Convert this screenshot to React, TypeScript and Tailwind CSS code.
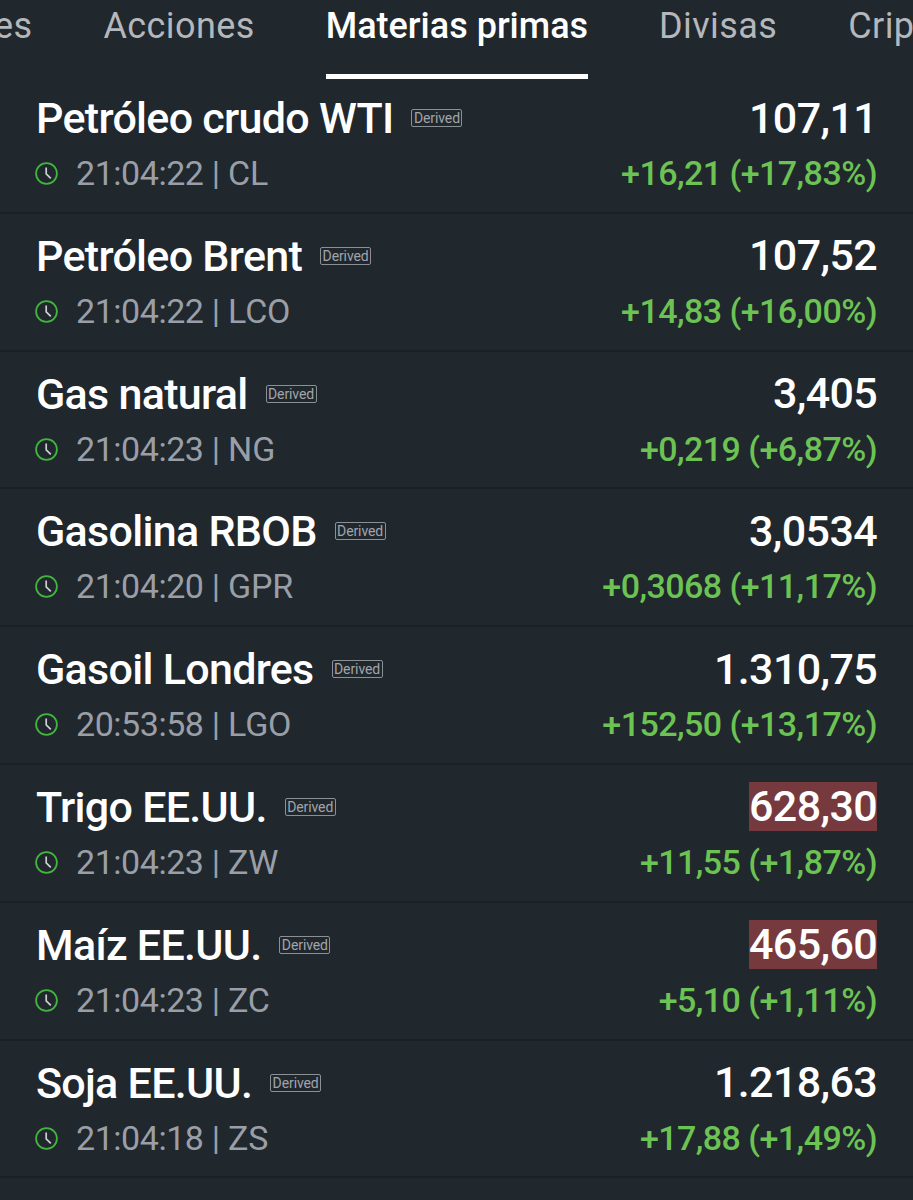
import React from "react";

interface Commodity {
  name: string;
  time: string;
  symbol: string;
  price: string;
  change: string;
  flash?: boolean;
}

const commodities: Commodity[] = [
  { name: "Petróleo crudo WTI", time: "21:04:22", symbol: "CL", price: "107,11", change: "+16,21 (+17,83%)" },
  { name: "Petróleo Brent", time: "21:04:22", symbol: "LCO", price: "107,52", change: "+14,83 (+16,00%)" },
  { name: "Gas natural", time: "21:04:23", symbol: "NG", price: "3,405", change: "+0,219 (+6,87%)" },
  { name: "Gasolina RBOB", time: "21:04:20", symbol: "GPR", price: "3,0534", change: "+0,3068 (+11,17%)" },
  { name: "Gasoil Londres", time: "20:53:58", symbol: "LGO", price: "1.310,75", change: "+152,50 (+13,17%)" },
  { name: "Trigo EE.UU.", time: "21:04:23", symbol: "ZW", price: "628,30", change: "+11,55 (+1,87%)", flash: true },
  { name: "Maíz EE.UU.", time: "21:04:23", symbol: "ZC", price: "465,60", change: "+5,10 (+1,11%)", flash: true },
  { name: "Soja EE.UU.", time: "21:04:18", symbol: "ZS", price: "1.218,63", change: "+17,88 (+1,49%)" },
];

const ClockIcon = () => (
  <svg viewBox="0 0 23 23" className="h-[23px] w-[23px] shrink-0" fill="none">
    <circle cx="11.5" cy="11.5" r="10.4" stroke="#41b53e" strokeWidth="1.8" />
    <path d="M11.2 5.5v6.4l4.6 4.4" stroke="#cdd0d4" strokeWidth="1.7" />
  </svg>
);

const CommodityRow: React.FC<{ item: Commodity }> = ({ item }) => (
  <div className="h-[137.8px] shrink-0 border-b-2 border-[#1a2026] pr-[36px] pl-[35px] pt-[15px]">
    <div className="flex h-[54px] items-center justify-between">
      <div className="flex items-center">
        <span className="ml-px text-[43px] leading-[54px] font-medium tracking-[-0.7px] text-white">{item.name}</span>
        <span className="ml-[18px] flex h-[18px] w-[51px] items-center justify-center rounded-[2px] border border-[#8b9096] text-[14px] leading-none tracking-[-0.1px] text-[#a0a5ab]">
          Derived
        </span>
      </div>
      <span
        className={`h-[49px] text-[43px] leading-[49px] font-medium tracking-[-0.65px] text-white ${
          item.flash ? "bg-[#763a3e]" : ""
        }`}
      >
        {item.price}
      </span>
    </div>
    <div className="flex h-[57px] items-center justify-between">
      <div className="flex items-center gap-[18px]">
        <ClockIcon />
        <span className="text-[34px] tracking-[-0.2px] text-[#9a9fa7]">
          <span className="tracking-[-0.45px]">{item.time}</span> | {item.symbol}
        </span>
      </div>
      <span className="text-[34px] font-medium tracking-[-0.55px] text-[#6cc353]">{item.change}</span>
    </div>
  </div>
);

export default function App() {
  return (
    <div className="flex h-[1200px] w-[913px] flex-col overflow-hidden bg-[#20272d] font-['Roboto',sans-serif]">
      {/* Pestañas */}
      <nav className="flex h-[79px] shrink-0 gap-[71px] text-[36px] leading-[52px] tracking-[0.4px] whitespace-nowrap text-[#b4b7bb]">
        <span className="-ml-[6px]">es</span>
        <span>Acciones</span>
        <span className="border-b-[5px] border-white font-medium tracking-normal text-white">
          Materias primas
        </span>
        <span>Divisas</span>
        <span>Crip</span>
      </nav>

      {/* Lista de cotizaciones */}
      <div className="-mt-[3px]">
        {commodities.map((item) => (
          <CommodityRow key={item.symbol} item={item} />
        ))}
      </div>
    </div>
  );
}
